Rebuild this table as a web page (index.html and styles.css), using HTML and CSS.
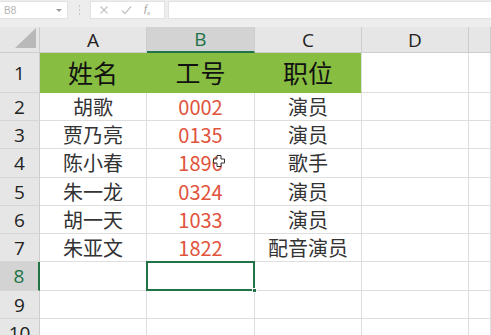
FILE: index.html
```html
<!DOCTYPE html>
<html lang="zh-CN">
<head>
<meta charset="utf-8">
<title>Sheet</title>
<link rel="stylesheet" href="styles.css">
</head>
<body>
<div class="app">
  <div class="formula-bar">
    <div class="namebox"><span class="ref">B8</span><span class="caret"></span></div>
    <div class="grip"><i></i><i></i><i></i></div>
    <div class="fxbox">
      <svg class="ic" width="10" height="10" viewBox="0 0 10 10"><path d="M1.5 1.5 L8.5 8.5 M8.5 1.5 L1.5 8.5" stroke="#c4c4c4" stroke-width="1.2" fill="none"/></svg>
      <svg class="ic" width="11" height="10" viewBox="0 0 11 10"><path d="M1 5.5 L4 8.5 L10 1.5" stroke="#c4c4c4" stroke-width="1.2" fill="none"/></svg>
      <span class="fx">f<sub>x</sub></span>
    </div>
    <div class="input"></div>
  </div>
  <div class="sheet">
    <div class="corner"><svg width="22" height="21" viewBox="0 0 22 21"><polygon points="21,0 21,20 0,20" fill="#b9b9b9"/></svg></div>
    <div class="colhead">A</div>
    <div class="colhead active">B</div>
    <div class="colhead">C</div>
    <div class="colhead">D</div>
    <div class="colhead"></div>

    <div class="rowhead">1</div>
    <div class="cell head">姓名</div>
    <div class="cell head">工号</div>
    <div class="cell head last">职位</div>
    <div class="cell"></div>
    <div class="cell"></div>

    <div class="rowhead">2</div>
    <div class="cell">胡歌</div>
    <div class="cell num">0002</div>
    <div class="cell">演员</div>
    <div class="cell"></div>
    <div class="cell"></div>

    <div class="rowhead">3</div>
    <div class="cell">贾乃亮</div>
    <div class="cell num">0135</div>
    <div class="cell">演员</div>
    <div class="cell"></div>
    <div class="cell"></div>

    <div class="rowhead">4</div>
    <div class="cell">陈小春</div>
    <div class="cell num">1896</div>
    <div class="cell">歌手</div>
    <div class="cell"></div>
    <div class="cell"></div>

    <div class="rowhead">5</div>
    <div class="cell">朱一龙</div>
    <div class="cell num">0324</div>
    <div class="cell">演员</div>
    <div class="cell"></div>
    <div class="cell"></div>

    <div class="rowhead">6</div>
    <div class="cell">胡一天</div>
    <div class="cell num">1033</div>
    <div class="cell">演员</div>
    <div class="cell"></div>
    <div class="cell"></div>

    <div class="rowhead">7</div>
    <div class="cell">朱亚文</div>
    <div class="cell num">1822</div>
    <div class="cell">配音演员</div>
    <div class="cell"></div>
    <div class="cell"></div>

    <div class="rowhead active">8</div>
    <div class="cell"></div>
    <div class="cell selected"><span class="handle"></span></div>
    <div class="cell"></div>
    <div class="cell"></div>
    <div class="cell"></div>

    <div class="rowhead">9</div>
    <div class="cell"></div>
    <div class="cell"></div>
    <div class="cell"></div>
    <div class="cell"></div>
    <div class="cell"></div>

    <div class="rowhead">10</div>
    <div class="cell"></div>
    <div class="cell"></div>
    <div class="cell"></div>
    <div class="cell"></div>
    <div class="cell"></div>

    <svg class="pointer" width="12" height="12" viewBox="0 0 12 12"><path d="M4 0.5 H8 V4 H11.5 V8 H8 V11.5 H4 V8 H0.5 V4 H4 Z" fill="#fff" stroke="#333" stroke-width="1"/></svg>
  </div>
</div>
</body>
</html>
```
FILE: styles.css
```css
* { box-sizing: border-box; }
html, body { margin: 0; padding: 0; }
body {
  width: 491px;
  height: 335px;
  overflow: hidden;
  background: #ffffff;
  font-family: "Noto Sans CJK SC", "Noto Sans", sans-serif;
}
.app { width: 491px; height: 335px; overflow: hidden; }

.formula-bar {
  height: 27px;
  background: #ededed;
  display: flex;
  align-items: flex-start;
  padding-top: 1px;
}
.namebox {
  width: 68px;
  height: 18px;
  background: #fff;
  border: 1px solid #e2e2e2;
  border-left: none;
  display: flex;
  align-items: center;
  justify-content: space-between;
  padding: 0 5px 0 4px;
}
.ref { font-family: "Liberation Sans", sans-serif; font-size: 10px; color: #b5b5b5; }
.caret {
  width: 0; height: 0;
  border-left: 3px solid transparent;
  border-right: 3px solid transparent;
  border-top: 3px solid #9a9a9a;
}
.grip {
  width: 22px;
  height: 18px;
  display: flex;
  flex-direction: column;
  align-items: center;
  justify-content: center;
  gap: 2px;
}
.grip i { display: block; width: 1px; height: 2px; background: #c8c8c8; }
.fxbox {
  width: 75px;
  height: 18px;
  background: #fff;
  border: 1px solid #e2e2e2;
  display: flex;
  align-items: center;
  padding-left: 8px;
  gap: 12px;
}
.fx { font-family: "Liberation Serif", serif; font-style: italic; font-size: 11px; color: #9a9a9a; line-height: 1; }
.fx sub { font-size: 7px; }
.input {
  flex: 1;
  height: 18px;
  margin-left: 3px;
  background: #fff;
  border: 1px solid #e2e2e2;
  border-right: none;
}

.sheet {
  position: relative;
  display: grid;
  grid-template-columns: 40px 107px 108px 107px 107px 1fr;
  grid-template-rows: 26px 40px 28px 28px 29px 28px 28px 28px 29px 28px 28px;
}
.corner {
  background: #e6e6e6;
  border-right: 1px solid #cdcdcd;
  border-bottom: 1px solid #cdcdcd;
  display: flex;
  align-items: flex-end;
  justify-content: flex-end;
  padding: 0 2px 3px 0;
}
.colhead {
  background: #e6e6e6;
  border-right: 1px solid #cdcdcd;
  border-bottom: 1px solid #cdcdcd;
  display: flex;
  align-items: center;
  justify-content: center;
  font-family: "Open Sans", "Noto Sans", sans-serif;
  font-size: 19px;
  color: #222;
}
.colhead.active {
  background: #d3d3d3;
  color: #217346;
  border-bottom: 2px solid #217346;
}
.rowhead {
  background: #e6e6e6;
  border-right: 1px solid #cdcdcd;
  border-bottom: 1px solid #d6d6d6;
  display: flex;
  align-items: center;
  justify-content: center;
  font-family: "Open Sans", "Noto Sans", sans-serif;
  font-size: 19px;
  color: #222;
}
.rowhead.active {
  background: #d3d3d3;
  color: #217346;
  border-right: 2px solid #217346;
}
.cell {
  border-right: 1px solid #dedede;
  border-bottom: 1px solid #dedede;
  display: flex;
  align-items: center;
  justify-content: center;
  font-size: 20px;
  color: #333;
  line-height: 1;
}
.cell.head {
  background: #87bd41;
  border-right-color: #87bd41;
  border-bottom-color: #87bd41;
  font-size: 25px;
  color: #111;
}
.cell.head.last { border-right-color: #dedede; }
.cell.num {
  font-family: "Noto Sans CJK SC", "Noto Sans", sans-serif;
  color: #e0533c;
}
.cell.selected { position: relative; }
.cell.selected::after {
  content: "";
  position: absolute;
  left: -1px; top: -1px; right: -1px; bottom: -1px;
  border: 2px solid #217346;
}
.handle {
  position: absolute;
  right: -3px;
  bottom: -3px;
  width: 5px;
  height: 5px;
  background: #217346;
  border: 1px solid #fff;
  z-index: 2;
}
.pointer {
  position: absolute;
  left: 213px;
  top: 128px;
}
```
